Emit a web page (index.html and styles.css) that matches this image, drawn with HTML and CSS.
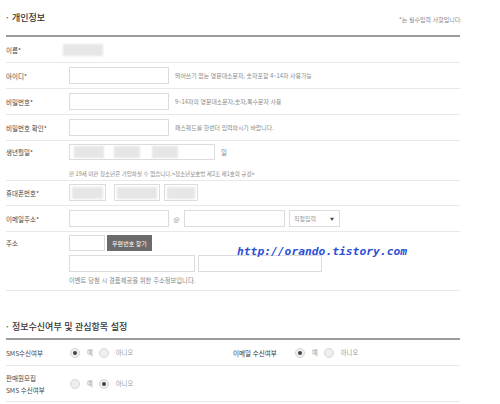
FILE: index.html
```html
<!DOCTYPE html>
<html lang="ko">
<head>
<meta charset="utf-8">
<title>개인정보</title>
<link rel="stylesheet" href="styles.css">
</head>
<body>
<div class="page">
  <div class="sec-head">
    <h2 class="sec-title"><span class="dot">·</span>개인정보</h2>
    <p class="req-note">*는 필수입력 사항입니다.</p>
  </div>

  <div class="row">
    <div class="label">이름*</div>
    <div class="field"><span class="blur blur-name"></span></div>
  </div>

  <div class="row">
    <div class="label">아이디*</div>
    <div class="field"><span class="input w100"></span><span class="help">띄어쓰기 없는 영문대소문자, 숫자포함 4~14자 사용가능</span></div>
  </div>

  <div class="row">
    <div class="label">비밀번호*</div>
    <div class="field"><span class="input w100"></span><span class="help">9~14자의 영문대소문자,숫자,특수문자 사용</span></div>
  </div>

  <div class="row">
    <div class="label">비밀번호 확인*</div>
    <div class="field"><span class="input w100"></span><span class="help">패스워드를 한번더 입력하시기 바랍니다.</span></div>
  </div>

  <div class="row row-top row-birth">
    <div class="label label-box">생년월일*</div>
    <div class="field-col">
      <div class="line">
        <span class="input box-birth">
          <span class="blur b1"></span><span class="blur b2"></span><span class="blur b3"></span>
        </span>
        <span class="unit">일</span>
      </div>
      <p class="note note-birth">만 19세 미만 청소년은 가입하실 수 없습니다.&lt;청소년보호법 제2조 제1호의 규정&gt;</p>
    </div>
  </div>

  <div class="row row-phone">
    <div class="label">휴대폰번호*</div>
    <div class="field phone">
      <span class="input p1"><span class="blur fill"></span></span>
      <span class="input p2"><span class="blur fill"></span></span>
      <span class="input p3"><span class="blur fill"></span></span>
    </div>
  </div>

  <div class="row">
    <div class="label">이메일주소*</div>
    <div class="field">
      <span class="input w100"></span>
      <span class="at">@</span>
      <span class="input w101"></span>
      <span class="select">직접입력<span class="caret">▼</span></span>
    </div>
  </div>

  <div class="row row-top row-addr">
    <div class="label label-box">주소</div>
    <div class="field-col">
      <div class="line">
        <span class="input zip"></span>
        <span class="btn">우편번호 찾기</span>
      </div>
      <div class="line addr-line">
        <span class="input addr1"></span>
        <span class="input addr2"></span>
      </div>
      <p class="note note-addr">이벤트 당첨 시 경품제공을 위한 주소정보입니다.</p>
    </div>
  </div>

  <div class="sec-head sec-head2">
    <h2 class="sec-title"><span class="dot">·</span>정보수신여부 및 관심항목 설정</h2>
  </div>

  <div class="row opt-row">
    <div class="label">SMS수신여부</div>
    <div class="radios">
      <span class="radio on"></span><span class="rlabel">예</span>
      <span class="radio"></span><span class="rlabel">아니오</span>
    </div>
    <div class="label label-dark">이메일 수신여부</div>
    <div class="radios">
      <span class="radio on"></span><span class="rlabel">예</span>
      <span class="radio"></span><span class="rlabel">아니오</span>
    </div>
  </div>

  <div class="row opt-row opt-row2">
    <div class="label two-line">판매원모집<br>SMS 수신여부</div>
    <div class="radios">
      <span class="radio"></span><span class="rlabel">예</span>
      <span class="radio on"></span><span class="rlabel">아니오</span>
    </div>
  </div>

  <div class="watermark">http://orando.tistory.com</div>
</div>
</body>
</html>
```

FILE: styles.css
```css
* {
  box-sizing: border-box;
  margin: 0;
  padding: 0;
}

body {
  margin: 0;
  background: #fff;
  font-family: "Noto Sans CJK KR", "Noto Sans", sans-serif;
  color: #333;
}

.page {
  position: relative;
  width: 500px;
  height: 404px;
  padding-left: 6px;
  overflow: hidden;
}

.sec-head {
  width: 454px;
  height: 37px;
  display: flex;
  justify-content: space-between;
  align-items: center;
  border-bottom: 2px solid #9b9b9b;
}

.sec-title {
  font-size: 9px;
  font-weight: 500;
  line-height: 12px;
  color: #333;
  display: flex;
  align-items: center;
}

.dot {
  width: 6px;
  color: #666;
}

.req-note {
  font-size: 6px;
  color: #888;
  line-height: 10px;
  padding-top: 4px;
  margin-right: -2px;
}

.sec-head2 {
  height: 49px;
  align-items: flex-end;
  padding-bottom: 5px;
}

.row {
  width: 454px;
  display: grid;
  grid-template-columns: 63px 1fr;
  align-items: center;
  min-height: 26px;
  border-bottom: 1px solid #e8e8e8;
}

.label {
  font-size: 6.5px;
  line-height: 10px;
  color: #444;
  white-space: nowrap;
}

.field {
  display: flex;
  align-items: center;
}

.field-col {
  display: flex;
  flex-direction: column;
}

.line {
  display: flex;
  align-items: center;
}

.input {
  display: block;
  height: 17px;
  border: 1px solid #dcdcdc;
  background: #fff;
  position: relative;
  flex: none;
}

.w100 { width: 100px; }
.w101 { width: 101px; }

.help {
  margin-left: 6px;
  font-size: 5.9px;
  color: #888;
  white-space: nowrap;
}

.blur {
  display: block;
  background: #e6e6e6;
  filter: blur(1.2px);
}

.blur-name {
  width: 40px;
  height: 12px;
  margin-left: -6px;
}

/* birth */
.row-birth {
  min-height: 40px;
  align-items: start;
  padding: 3px 0 1px;
}

.label-box {
  line-height: 16px;
}

.box-birth {
  width: 146px;
  height: 16px;
  display: flex;
  align-items: center;
  padding-left: 4px;
}

.box-birth .b1 { width: 30px; height: 12px; }
.box-birth .b2 { width: 26px; height: 12px; margin-left: 10px; }
.box-birth .b3 { width: 26px; height: 12px; margin-left: 12px; }

.unit {
  margin-left: 6px;
  font-size: 6.5px;
  color: #888;
}

.note {
  margin-top: 9px;
  font-size: 6.1px;
  line-height: 10px;
  color: #888;
  white-space: nowrap;
}

.note-birth {
  font-size: 5.5px;
}

/* phone */
.row-phone {
  min-height: 25px;
  padding: 3px 0 4px;
}

.phone .input {
  display: flex;
  align-items: center;
  padding: 0 2px;
}

.phone .fill {
  width: 100%;
  height: 12px;
}

.p1 { width: 37px; }
.p2 { width: 46px; margin-left: 8px; }
.p3 { width: 34px; margin-left: 4px; }

/* email */
.at {
  width: 15px;
  text-align: center;
  font-size: 6.5px;
  color: #999;
}

.select {
  width: 51px;
  height: 17px;
  margin-left: 4px;
  border: 1px solid #dcdcdc;
  display: flex;
  align-items: center;
  justify-content: space-between;
  padding: 0 5px 0 4px;
  font-size: 6px;
  color: #999;
}

.caret {
  font-size: 4px;
  color: #444;
}

/* address */
.row-addr {
  min-height: 59px;
  align-items: start;
  padding: 3px 0 4px;
}

.zip {
  width: 36px;
  height: 16px;
}

.btn {
  margin-left: 2px;
  width: 45px;
  height: 16px;
  background: #6b6b6b;
  color: #fff;
  font-size: 6px;
  display: flex;
  align-items: center;
  justify-content: center;
  white-space: nowrap;
}

.addr-line {
  margin-top: 4px;
}

.addr1 { width: 126px; }
.addr2 { width: 124px; margin-left: 3px; }

.note-addr {
  margin-top: 4px;
  font-size: 6.3px;
}

/* options */
.opt-row {
  grid-template-columns: 64px 163px 62px 1fr;
  min-height: 26px;
}

.opt-row2 {
  min-height: 36px;
}

.two-line {
  line-height: 12px;
}

.label-dark {
  color: #333;
}

.radios {
  display: flex;
  align-items: center;
}

.radio {
  width: 10px;
  height: 10px;
  border-radius: 50%;
  border: 1px solid #d6d6d6;
  background: #efefef;
  position: relative;
  flex: none;
}

.radio.on::after {
  content: "";
  position: absolute;
  left: 2px;
  top: 2px;
  width: 4px;
  height: 4px;
  border-radius: 50%;
  background: #444;
}

.rlabel {
  font-size: 6.3px;
  color: #999;
  margin-left: 7px;
  margin-right: 6px;
}

.watermark {
  position: absolute;
  left: 237px;
  top: 244px;
  font-family: "DejaVu Sans Mono", monospace;
  font-style: italic;
  font-weight: bold;
  font-size: 11.3px;
  line-height: 16px;
  color: #2d4fd4;
}
```
